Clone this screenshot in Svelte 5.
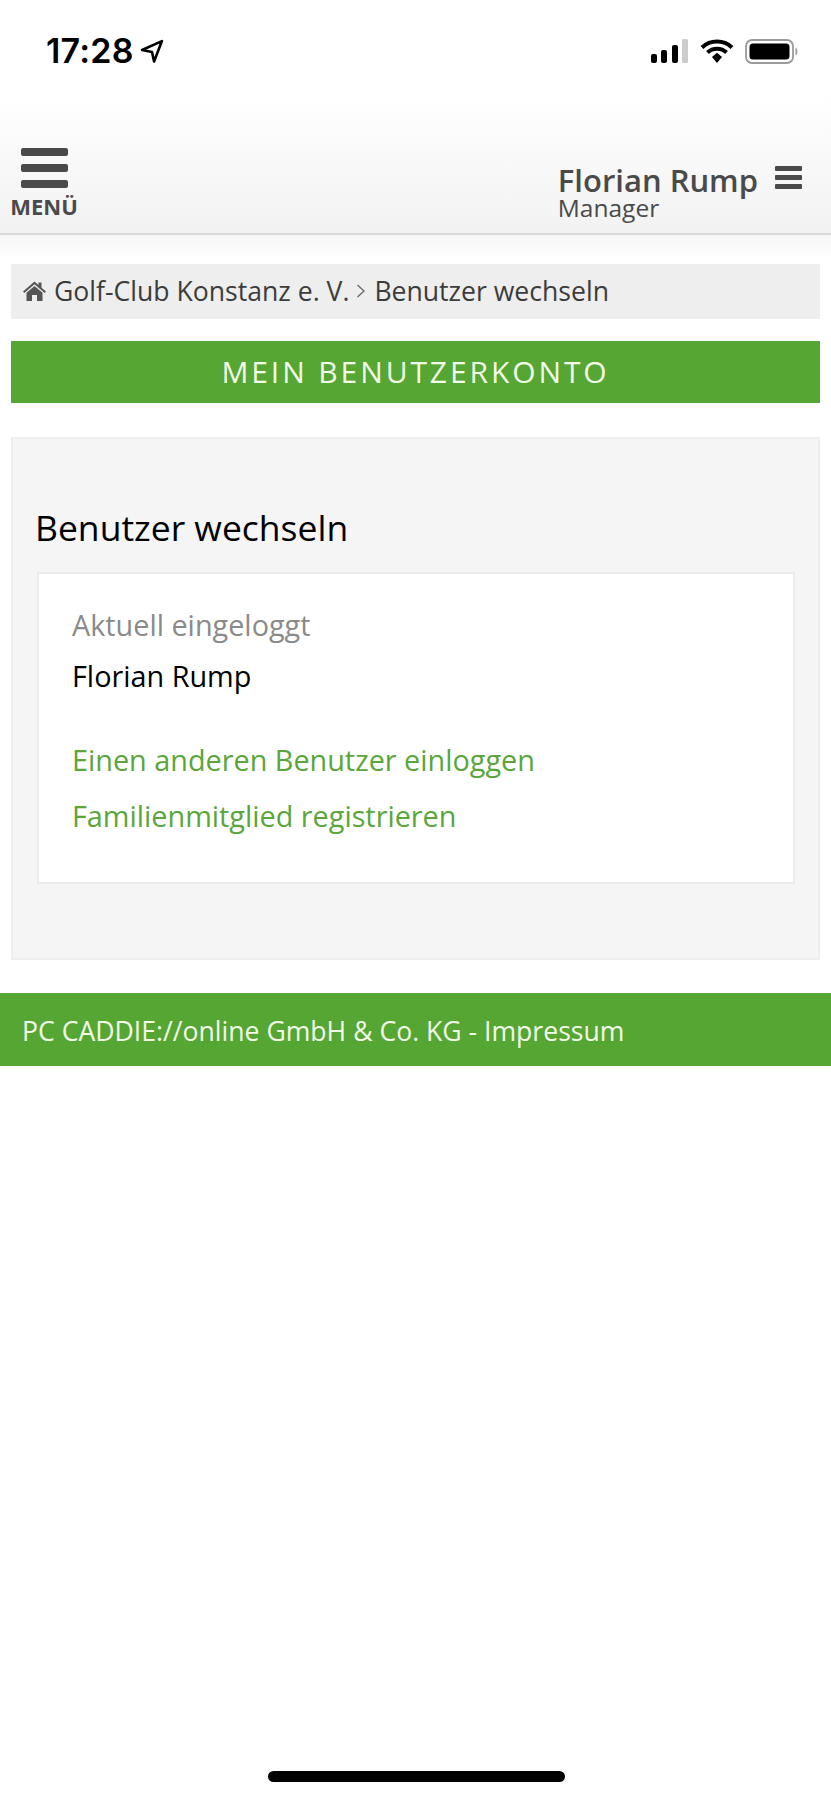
<script>
	const links = ['Einen anderen Benutzer einloggen', 'Familienmitglied registrieren'];
</script>

<div class="screen">
	<div class="status">
		<div class="clock">
			<span>17:28</span>
			<svg width="24" height="24" viewBox="0 0 23 23">
				<path d="M2 10.500 L21 2 L13.500 21.500 L11.500 12.500 Z" fill="none" stroke="#000" stroke-width="2.500" stroke-linejoin="round" />
			</svg>
		</div>
		<div class="status-icons">
			<svg width="38" height="24" viewBox="0 0 38 24">
				<rect x="0" y="15" width="6" height="9" rx="2" fill="#000" />
				<rect x="10" y="11" width="6" height="13" rx="2" fill="#000" />
				<rect x="21" y="6" width="6" height="18" rx="2" fill="#000" />
				<rect x="31" y="0" width="6" height="24" rx="1.5" fill="#ccc" />
			</svg>
			<svg width="34" height="24" viewBox="0 0 34 24">
				<path d="M2 8.500 A22 22 0 0 1 32 8.500" fill="none" stroke="#000" stroke-width="4" />
				<path d="M7.500 13.500 A14 14 0 0 1 26.500 13.500" fill="none" stroke="#000" stroke-width="4" />
				<path d="M12 18 L17 13.800 L22 18 L17 24 Z" fill="#000" />
			</svg>
			<svg width="54" height="25" viewBox="0 0 54 25">
				<rect x="1" y="1" width="47" height="23" rx="6" fill="none" stroke="#9a9a9a" stroke-width="1.8" />
				<rect x="4.500" y="4.500" width="40" height="16" rx="3.500" fill="#000" />
				<path d="M50.500 8.500 C53 9.500 53 15.500 50.500 16.500 Z" fill="#9a9a9a" />
			</svg>
		</div>
	</div>

	<header class="topbar">
		<div class="menu">
			<div class="burger"><i></i><i></i><i></i></div>
			<span>MENÜ</span>
		</div>
		<div class="user">
			<div class="user-text">
				<div class="name">Florian Rump</div>
				<div class="role">Manager</div>
			</div>
			<div class="user-burger"><i></i><i></i><i></i></div>
		</div>
	</header>

	<main class="content">
		<nav class="crumbs">
			<svg width="23" height="20" viewBox="0 0 23 20">
				<path d="M11.500 0.500 L15.500 4 V1.500 H18.500 V6.700 L23 10.500 L21.700 12 L11.500 3.300 L1.300 12 L0 10.500 Z" fill="#555" />
				<path d="M11.500 5 L19.500 11.700 V20 H14 V14 H9 V20 H3.500 V11.700 Z" fill="#555" />
			</svg>
			<span>Golf-Club Konstanz e. V.</span>
			<svg class="sep" width="10" height="16" viewBox="0 0 10 16">
				<path d="M1.500 2 L8 8 L1.500 14" fill="none" stroke="#666" stroke-width="1.300" />
			</svg>
			<span>Benutzer wechseln</span>
		</nav>

		<div class="account">MEIN BENUTZERKONTO</div>

		<section class="panel">
			<h1>Benutzer wechseln</h1>
			<div class="card">
				<div class="label">Aktuell eingeloggt</div>
				<div class="current">Florian Rump</div>
				<div class="links">
					{#each links as link}
						<a href="#top">{link}</a>
					{/each}
				</div>
			</div>
		</section>
	</main>

	<footer class="foot">PC CADDIE://online GmbH &amp; Co. KG - Impressum</footer>

	<div class="home-bar"></div>
</div>

<style>
	:global(body) {
		margin: 0;
		background: #fff;
	}

	.screen {
		position: relative;
		height: 1800px;
		font-family: 'Open Sans', sans-serif;
		overflow: hidden;
	}

	.status {
		height: 95px;
		box-sizing: border-box;
		padding: 32px 32px 0 46px;
		display: flex;
		justify-content: space-between;
		align-items: flex-start;
	}

	.clock {
		display: flex;
		align-items: center;
		gap: 6px;
		font-family: Inter, sans-serif;
		font-size: 34px;
		font-weight: 600;
		line-height: 38px;
		color: #000;
		letter-spacing: 0.2px;
	}

	.status-icons {
		display: flex;
		align-items: flex-start;
		gap: 11px;
		padding-top: 7px;
	}

	.topbar {
		height: 140px;
		box-sizing: border-box;
		background: linear-gradient(#fff, #f2f2f2);
		border-bottom: 2px solid #d8d8d8;
		display: flex;
		justify-content: space-between;
		padding: 53px 29px 0 10px;
	}

	.menu {
		width: 68px;
		display: flex;
		flex-direction: column;
		align-items: center;
		color: #4a4a4a;
	}

	.menu span {
		font-size: 22px;
		font-weight: 700;
		line-height: 24px;
		margin-top: 6px;
	}

	.burger {
		width: 47px;
		display: flex;
		flex-direction: column;
		gap: 8px;
	}

	.burger i {
		height: 8px;
		border-radius: 2px;
		background: #4a4a4a;
	}

	.user {
		display: flex;
		gap: 17px;
		align-items: flex-start;
		color: #4a4a4a;
	}

	.user-text {
		margin-top: 15px;
	}

	.name {
		font-size: 31px;
		font-weight: 600;
		line-height: 34px;
	}

	.role {
		font-size: 24.5px;
		line-height: 22px;
	}

	.user-burger {
		width: 27px;
		margin-top: 18px;
		display: flex;
		flex-direction: column;
		gap: 4px;
	}

	.user-burger i {
		height: 5px;
		background: #4a4a4a;
		border-radius: 1px;
	}

	.content {
		padding: 29px 11px 0;
		background: linear-gradient(#f6f6f6, #fff 24px);
	}

	.crumbs {
		height: 55px;
		box-sizing: border-box;
		background: #eee;
		padding: 0 0 2px 12px;
		display: flex;
		align-items: center;
		font-size: 26.6px;
		color: #3c3c3c;
	}

	.crumbs span {
		margin-left: 8px;
	}

	.crumbs .sep {
		margin-left: 7px;
		margin-right: 0;
	}

	.account {
		margin-top: 22px;
		height: 62px;
		box-sizing: border-box;
		padding-bottom: 2px;
		background: #55a632;
		color: #f2fbe9;
		font-size: 30px;
		letter-spacing: 2.9px;
		display: flex;
		align-items: center;
		justify-content: center;
	}

	.panel {
		margin-top: 34px;
		height: 523px;
		box-sizing: border-box;
		background: #f5f5f5;
		border: 2px solid #eee;
		padding: 62px 22px 0;
	}

	h1 {
		margin: 0;
		font-size: 35.500px;
		font-weight: 400;
		line-height: 52px;
		color: #000;
	}

	.card {
		margin: 19px 1px 0 2px;
		height: 312px;
		box-sizing: border-box;
		background: #fff;
		border: 2px solid #ececec;
		padding: 31px 33px 0;
		font-size: 28.800px;
	}

	.label {
		color: #8a8a8a;
		line-height: 40px;
	}

	.current {
		color: #000;
		line-height: 40px;
		margin-top: 11px;
	}

	.links {
		margin-top: 44px;
		display: flex;
		flex-direction: column;
		gap: 16px;
	}

	.links a {
		color: #5aa63a;
		line-height: 40px;
		text-decoration: none;
	}

	.foot {
		margin-top: 33px;
		height: 73px;
		box-sizing: border-box;
		padding: 2px 0 0 22px;
		background: #55a632;
		color: #f2fbe9;
		font-size: 26.600px;
		display: flex;
		align-items: center;
	}

	.home-bar {
		position: absolute;
		left: 268px;
		top: 1771px;
		width: 297px;
		height: 11px;
		border-radius: 6px;
		background: #000;
	}
</style>
